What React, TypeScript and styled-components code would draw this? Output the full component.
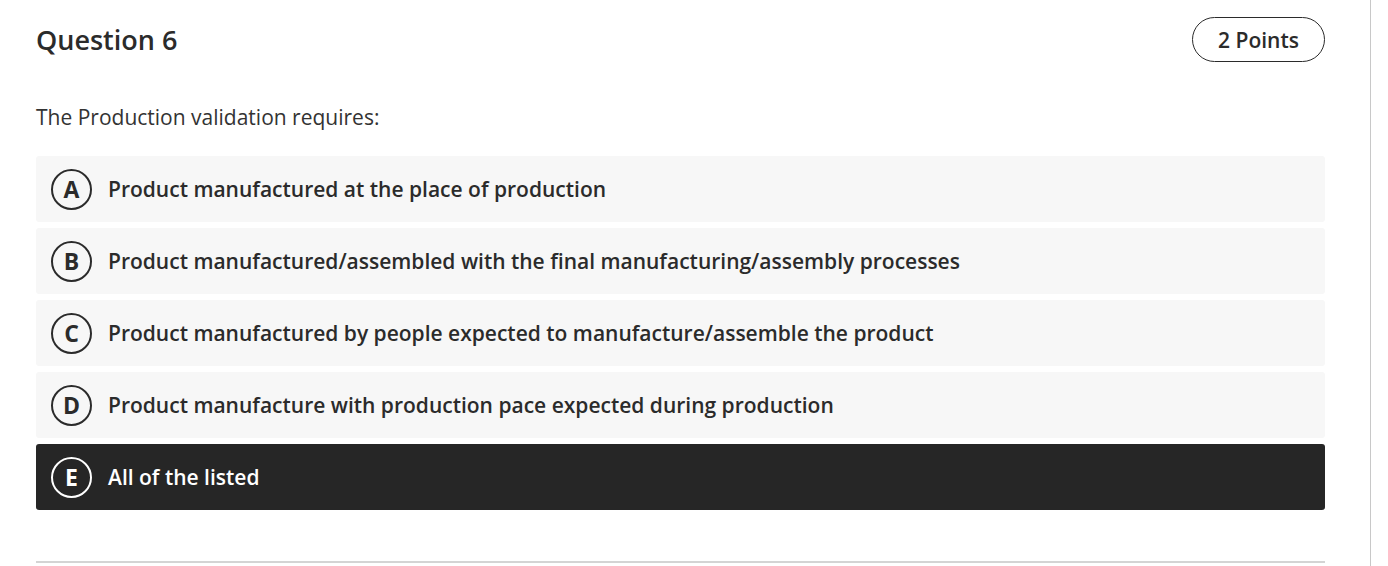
import styled, { createGlobalStyle } from 'styled-components';

const GlobalStyle = createGlobalStyle`
  body {
    margin: 0;
    background: #fff;
    font-family: 'Open Sans', 'Liberation Sans', sans-serif;
    color: #2b2b2b;
  }
`;

const Page = styled.div`
  box-sizing: border-box;
  width: 1371px;
  height: 566px;
  padding: 17px 45px 0 36px;
  border-right: 1px solid #c8c8c8;
  display: flex;
  flex-direction: column;
`;

const Header = styled.div`
  display: flex;
  align-items: center;
  justify-content: space-between;
`;

const Title = styled.h2`
  margin: 0;
  font-size: 27px;
  font-weight: 600;
  color: #2b2b2b;
`;

const PointsPill = styled.div`
  box-sizing: border-box;
  height: 45px;
  padding: 0 25px;
  display: flex;
  align-items: center;
  border: 1px solid #2b2b2b;
  border-radius: 23px;
  font-size: 21px;
  font-weight: 600;
`;

const Prompt = styled.p`
  margin: 41px 0 25px;
  font-size: 21px;
  line-height: 28px;
  color: #333;
`;

const Options = styled.div`
  display: flex;
  flex-direction: column;
  gap: 6px;
`;

const Option = styled.div<{ $selected?: boolean }>`
  height: 66px;
  padding: 0 15px;
  display: flex;
  align-items: center;
  gap: 16px;
  border-radius: 3px;
  background: ${(p) => (p.$selected ? '#262626' : '#f7f7f7')};
  color: ${(p) => (p.$selected ? '#fff' : '#2b2b2b')};
  cursor: pointer;
`;

const Letter = styled.span<{ $selected?: boolean }>`
  box-sizing: border-box;
  width: 41px;
  height: 41px;
  flex-shrink: 0;
  display: flex;
  align-items: center;
  justify-content: center;
  border: 2.5px solid ${(p) => (p.$selected ? '#fff' : '#2b2b2b')};
  border-radius: 50%;
  font-size: 23px;
  font-weight: 700;
  line-height: 1;
`;

const OptionText = styled.span`
  font-size: 21px;
  font-weight: 600;
`;

const Divider = styled.hr`
  margin: 51px 0 0;
  border: none;
  border-top: 2px solid #d4d4d4;
`;

const answers = [
  { key: 'A', text: 'Product manufactured at the place of production' },
  { key: 'B', text: 'Product manufactured/assembled with the final manufacturing/assembly processes' },
  { key: 'C', text: 'Product manufactured by people expected to manufacture/assemble the product' },
  { key: 'D', text: 'Product manufacture with production pace expected during production' },
  { key: 'E', text: 'All of the listed' },
];

export default function App() {
  const selected = 'E';
  return (
    <>
      <GlobalStyle />
      <Page>
        <Header>
          <Title>Question 6</Title>
          <PointsPill>2 Points</PointsPill>
        </Header>
        <Prompt>The Production validation requires:</Prompt>
        <Options>
          {answers.map((a) => (
            <Option key={a.key} $selected={a.key === selected}>
              <Letter $selected={a.key === selected}>{a.key}</Letter>
              <OptionText>{a.text}</OptionText>
            </Option>
          ))}
        </Options>
        <Divider />
      </Page>
    </>
  );
}
